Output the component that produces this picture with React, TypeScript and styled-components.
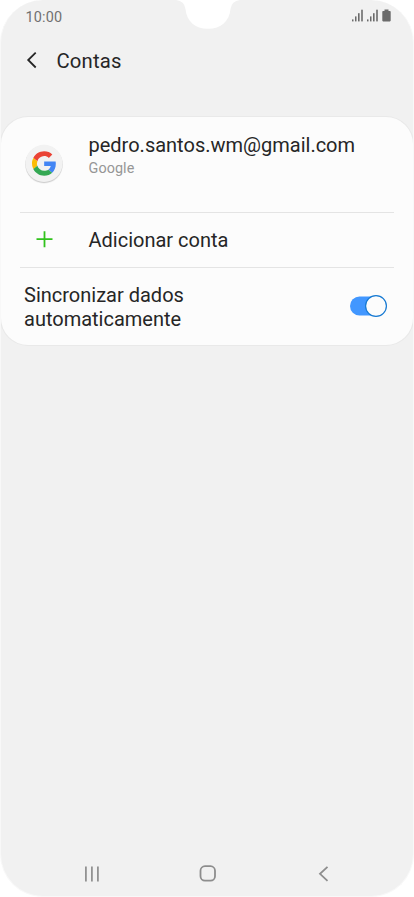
import React from "react";
import styled, { createGlobalStyle } from "styled-components";

const GlobalStyle = createGlobalStyle`
  *, *::before, *::after { box-sizing: border-box; }
  body { margin: 0; background: #fff; font-family: Roboto, "Liberation Sans", sans-serif; }
  svg { display: block; flex: none; }
`;

const Phone = styled.main`
  position: relative;
  display: flex;
  flex-direction: column;
  width: 414px;
  height: 897px;
  overflow: hidden;
  background: #f1f1f1;
  border: solid #f8f8f8;
  border-width: 0 1px 1px;
  border-radius: 43px;
  color: #262626;
`;

const Notch = styled.svg`
  position: absolute;
  top: 0;
  left: 174.5px;
`;

const StatusBar = styled.header`
  display: flex;
  align-items: center;
  justify-content: space-between;
  height: 34px;
  padding: 0 22.5px 0 24.5px;
`;

const Clock = styled.time`
  font-size: 14.4px;
  line-height: 18px;
  letter-spacing: 0.2px;
  padding-top: 1px;
  color: #707070;
`;

const StatusIcons = styled.div`
  display: flex;
  padding-bottom: 2.5px;
`;

const TitleBar = styled.div`
  display: flex;
  align-items: center;
  height: 54px;
  padding-left: 25px;
  gap: 19.5px;
`;

const BackButton = styled.button`
  display: flex;
  padding: 0 0 2px;
  border: 0;
  background: none;
`;

const Title = styled.h1`
  margin: 0;
  font-size: 20.3px;
  line-height: 24px;
  font-weight: 400;
  letter-spacing: 0.15px;
`;

const Card = styled.section`
  display: flex;
  flex-direction: column;
  height: 228px;
  margin-top: 29px;
  padding: 0 19px;
  background: #fcfcfc;
  border-radius: 27px;
  box-shadow: 0 0 0 1px #e9e9e9;
`;

const Row = styled.div<{ $height: number; $divided?: boolean }>`
  display: flex;
  align-items: center;
  height: ${(p) => p.$height}px;
  border-bottom: ${(p) => (p.$divided ? "1px solid #e4e4e4" : "0")};
`;

const IconSlot = styled.div`
  display: flex;
  justify-content: center;
  width: 48px;
  margin-right: 20.5px;
`;

const AccountText = styled.div`
  display: flex;
  flex-direction: column;
  padding-bottom: 16px;
`;

const Label = styled.span`
  font-size: 20px;
  line-height: 23px;
`;

const Provider = styled.span`
  font-size: 14.4px;
  line-height: 20px;
  margin-top: 2px;
  letter-spacing: 0.08px;
  color: #969696;
`;

const SyncText = styled.div`
  display: flex;
  flex-direction: column;
  flex: 1;
  padding: 2px 0 0 4px;
  gap: 1px;
`;

const SwitchButton = styled.button`
  display: flex;
  padding: 0 0 2px;
  border: 0;
  background: none;
  margin-right: 7px;
`;

const Spacer = styled.div`
  flex: 1;
`;

const NavBar = styled.nav`
  display: flex;
  justify-content: space-between;
  align-items: center;
  height: 44px;
  padding: 0 79px 0 81px;
`;

const NavButton = styled.button`
  display: flex;
  padding: 0;
  border: 0;
  background: none;
`;

const Signal = () => (
  <svg width="15" height="13" viewBox="0 0 15 13" fill="#6b6b6b">
    <rect x="0" y="10.4" width="1.5" height="2" />
    <rect x="3" y="7.4" width="1.5" height="5" />
    <rect x="6" y="4.2" width="1.6" height="8.2" />
    <rect x="9.2" y="0.7" width="1.6" height="11.7" />
  </svg>
);

const Battery = () => (
  <svg width="9" height="13" viewBox="0 0 9 13" fill="#6b6b6b">
    <path d="M2.5 0.4h4V2h1.4q.8 0 .8.8v8.8q0 .8-.8.8H1.1q-.8 0-.8-.8V2.8q0-.8.8-.8h1.4z" />
  </svg>
);

const GoogleBadge = () => (
  <svg width="42" height="42" viewBox="0 0 42 42">
    <circle cx="21" cy="20.8" r="19" fill="#f0f0f0" />
    <circle cx="21" cy="20.300" r="18.6" fill="#cfcfcf" />
    <circle cx="21" cy="19.400" r="18.6" fill="#f2f2f2" />
    <g transform="translate(9 7.3) scale(.507)">
      <path fill="#EA4335" d="M24 9.5c3.54 0 6.71 1.22 9.21 3.6l6.85-6.85C35.9 2.38 30.47 0 24 0 14.62 0 6.51 5.38 2.56 13.22l7.98 6.19C12.43 13.72 17.74 9.5 24 9.5z" />
      <path fill="#4285F4" d="M46.98 24.55c0-1.57-.15-3.09-.38-4.55H24v9.02h12.94c-.58 2.96-2.26 5.48-4.78 7.18l7.73 6c4.51-4.18 7.09-10.36 7.09-17.65z" />
      <path fill="#FBBC05" d="M10.53 28.59a14.5 14.5 0 0 1 0-9.18l-7.98-6.19a24 24 0 0 0 0 21.56z" />
      <path fill="#34A853" d="M24 48c6.48 0 11.93-2.13 15.89-5.81l-7.73-6c-2.15 1.45-4.92 2.3-8.16 2.3-6.26 0-11.57-4.22-13.47-9.91l-7.98 6.19C6.51 42.62 14.62 48 24 48z" />
    </g>
  </svg>
);

export default function App() {
  return (
    <>
      <GlobalStyle />
      <Phone>
        <Notch width="64" height="30" viewBox="0 0 64 30">
          <path d="M0 0Q8.5 1 9.5 9C10.5 21 19 28.8 32 28.8S53.5 21 54.5 9Q55.5 1 64 0Z" fill="#fff" />
        </Notch>
        <StatusBar>
          <Clock>10:00</Clock>
          <StatusIcons>
            <Signal />
            <Signal />
            <Battery />
          </StatusIcons>
        </StatusBar>
        <TitleBar>
          <BackButton aria-label="Voltar">
            <svg width="11" height="18" viewBox="0 0 11 18" fill="none" stroke="#262626" strokeWidth="1.8">
              <path d="M9.7 1.6L2.2 9L9.7 16.5" />
            </svg>
          </BackButton>
          <Title>Contas</Title>
        </TitleBar>
        <Card>
          <Row $height={96} $divided>
            <IconSlot><GoogleBadge /></IconSlot>
            <AccountText>
              <Label>pedro.santos.wm@gmail.com</Label>
              <Provider>Google</Provider>
            </AccountText>
          </Row>
          <Row $height={55} $divided>
            <IconSlot>
              <svg width="18" height="18" viewBox="0 0 18 18" stroke="#31c21c" strokeWidth="1.8">
                <path d="M1.5 8.2H17.5M9.5 .2V16.2" />
              </svg>
            </IconSlot>
            <Label>Adicionar conta</Label>
          </Row>
          <Row $height={77}>
            <SyncText>
              <Label>Sincronizar dados</Label>
              <Label>automaticamente</Label>
            </SyncText>
            <SwitchButton role="switch" aria-checked="true" aria-label="Sincronizar dados automaticamente">
              <svg width="38" height="24" viewBox="0 0 38 24">
                <rect x="1" y="2.5" width="34" height="19" rx="9.5" fill="#4297ff" />
                <circle cx="27" cy="12" r="10.4" fill="#fcfcfc" stroke="#1579d2" strokeWidth="1.2" />
              </svg>
            </SwitchButton>
          </Row>
        </Card>
        <Spacer />
        <NavBar>
          <NavButton aria-label="Recentes">
            <svg width="20" height="16" viewBox="0 0 20 16" fill="#929292">
              <rect x="3" y="0.5" width="1.8" height="15" />
              <rect x="9" y="0.5" width="1.8" height="15" />
              <rect x="15" y="0.5" width="1.8" height="15" />
            </svg>
          </NavButton>
          <NavButton aria-label="Início">
            <svg width="18" height="18" viewBox="0 0 18 18" fill="none" stroke="#8d8d8d" strokeWidth="1.8">
              <rect x="1.5" y="1.2" width="14.5" height="14.5" rx="4.5" />
            </svg>
          </NavButton>
          <NavButton aria-label="Voltar">
            <svg width="20" height="16" viewBox="0 0 20 16" fill="none" stroke="#8d8d8d" strokeWidth="1.8">
              <path d="M13.5 .8L6 7.8L13.5 14.8" />
            </svg>
          </NavButton>
        </NavBar>
      </Phone>
    </>
  );
}
